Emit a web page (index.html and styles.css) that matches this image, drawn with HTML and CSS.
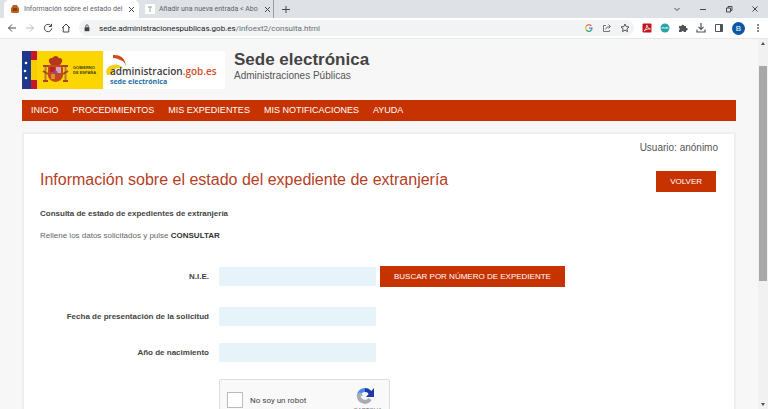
FILE: index.html
```html
<!DOCTYPE html>
<html lang="es">
<head>
    <meta charset="UTF-8">
    <meta name="viewport" content="width=device-width, initial-scale=1.0">
    <title>Información sobre el estado del expediente de extranjería</title>
    <link rel="stylesheet" href="styles.css">
</head>
<body>

    <div class="tabs">
        <div class="tab active">
            <svg class="favicon" viewBox="0 0 10 10"><path d="M3 1h4l1 2 1 1v4L8 9H2L1 8V4l1-1z" fill="#b8621b"/><path d="M3 4h4v3H3z" fill="#8d3c12"/></svg>
            <span class="tab-title">Información sobre el estado del</span>
            <button class="icon-btn" aria-label="Cerrar"><svg viewBox="0 0 10 10"><path d="M3 3l5 5M8 3l-5 5"/></svg></button>
        </div>
        <div class="tab">
            <svg class="favicon" viewBox="0 0 10 10"><rect width="10" height="10" fill="#fff"/><path d="M3 3h4M5 3v5" stroke="#8aa" fill="none"/></svg>
            <span class="tab-title">Añadir una nueva entrada &lt; Abo</span>
            <button class="icon-btn" aria-label="Cerrar"><svg viewBox="0 0 10 10"><path d="M3 3l5 5M8 3l-5 5"/></svg></button>
        </div>
        <button class="icon-btn new-tab" aria-label="Nueva pestaña"><svg viewBox="0 0 10 10"><path d="M5 2v7M1 5.500h8"/></svg></button>
        <div class="window-controls">
            <button class="icon-btn" aria-label="Buscar pestañas"><svg viewBox="0 0 10 10"><path d="M2.500 4L5 6.500 7.500 4"/></svg></button>
            <button class="icon-btn" aria-label="Minimizar"><svg viewBox="0 0 10 10"><path d="M2 5.500h6"/></svg></button>
            <button class="icon-btn" aria-label="Restaurar"><svg viewBox="0 0 10 10"><path d="M2.500 4h4v4h-4zM4 4V2.500h4v4H6.500"/></svg></button>
            <button class="icon-btn" aria-label="Cerrar ventana"><svg viewBox="0 0 10 10"><path d="M2.500 2.500l5 5M7.500 2.500l-5 5"/></svg></button>
        </div>
    </div>

    <div class="toolbar">
        <div class="history">
            <button class="icon-btn" aria-label="Atrás"><svg viewBox="0 0 10 10"><path d="M9 5H1.500M5 1.500L1.500 5 5 8.500"/></svg></button>
            <button class="icon-btn faded" aria-label="Adelante"><svg viewBox="0 0 10 10"><path d="M1 5h7.500M5 1.500L8.500 5 5 8.500"/></svg></button>
            <button class="icon-btn" aria-label="Recargar"><svg viewBox="0 0 10 10"><path d="M8 2.800A3.700 3.700 0 1 0 8.700 5.500M8.500 .8v2.700H5.800"/></svg></button>
            <button class="icon-btn" aria-label="Inicio"><svg viewBox="0 0 10 10"><path d="M1 5l4-4 4 4M2.200 4v5h5.600V4"/></svg></button>
        </div>
        <div class="address">
            <svg class="lock" viewBox="0 0 10 10"><path d="M2 4h6v5H2z" fill="#444"/><path d="M3.500 4V2.500a1.500 1.500 0 0 1 3 0V4" fill="none" stroke="#444"/></svg>
            <span class="url"><b>sede.administracionespublicas.gob.es</b>/infoext2/consulta.html</span>
            <svg viewBox="0 0 10 10" fill="none" stroke-width="1.200"><path d="M2.300 3.200A3 3 0 0 1 7.300 3" stroke="#ea4335"/><path d="M2.300 3.200a3.200 3.200 0 0 0 0 3.600" stroke="#fbbc05"/><path d="M2.300 6.800A3 3 0 0 0 7 7.500" stroke="#34a853"/><path d="M5 5.200h3A3 3 0 0 1 7 7.500" stroke="#4285f4"/></svg>
            <svg viewBox="0 0 10 10" fill="none" stroke="#777"><path d="M4 2.500H1.500v6h6V7M3.500 6.500Q4 3.500 8 3.500M6.500 1.500l2 2-2 2"/></svg>
            <svg viewBox="0 0 10 10" fill="none" stroke="#555"><path d="M5 1l1.200 2.600 2.800.3-2.100 1.900.6 2.800L5 7.200 2.500 8.600l.6-2.800L1 3.900l2.800-.3z"/></svg>
        </div>
        <div class="extensions">
            <svg viewBox="0 0 10 10"><rect x=".5" y=".5" width="9" height="9" rx="1" fill="#c4161c"/><path d="M2 8C4 6 5 4 4.800 2 5.500 5 7 6 8.500 6 6 5.500 4 6.500 2 8z" fill="none" stroke="#fff" stroke-width=".8"/></svg>
            <svg viewBox="0 0 10 10"><circle cx="5" cy="5" r="4.500" fill="#28a5a5"/><path d="M2 6V4.500h2V6M5 6V4.500h3V6M6.500 4.500V6" fill="none" stroke="#d8f2f0" stroke-width=".7"/></svg>
            <svg viewBox="0 0 10 10"><path d="M1 3h2.500a1.300 1.300 0 1 1 2.600 0H8v2a1.300 1.300 0 1 1 0 2.500V9H5.800a1.100 1.100 0 0 0-2.200 0H1V7a1.200 1.200 0 0 0 0-2.200z" fill="#505357"/></svg>
            <svg viewBox="0 0 10 10" fill="none" stroke="#505357" stroke-width="1.200"><path d="M5 0v6M2.500 3.800L5 6.300l2.500-2.500M1 6.500V9h8V6.500"/></svg>
            <svg viewBox="0 0 10 10"><path d="M1.500 1.500h7v7h-7z" fill="none" stroke="#505357"/><path d="M6 1.500h2.500v7H6z" fill="#505357"/></svg>
            <span class="avatar">B</span>
            <svg viewBox="0 0 10 10" fill="#505357"><circle cx="5" cy="2" r=".9"/><circle cx="5" cy="5" r=".9"/><circle cx="5" cy="8" r=".9"/></svg>
        </div>
    </div>

    <div class="viewport">
        <div class="page">
            <header>
                <svg class="gob-logo" viewBox="0 0 81 38" role="img" aria-label="Gobierno de España">
                    <rect width="81" height="38" fill="#fdd500"/>
                    <path d="M0 0h9v38H0z" fill="#173a8c"/>
                    <path d="M9 0h6v9H9zM9 29h6v9H9z" fill="#c8152d"/>
                    <path d="M9 9h6v20H9z" fill="#f9cd06"/>
                    <path d="M0 0h9v8H0zM0 30h9v8H0z" fill="#22358b"/>
                    <circle cx="4" cy="12" r="1.300" fill="#fff"/><circle cx="3" cy="20" r="1.300" fill="#fff"/><circle cx="4" cy="27" r="1.300" fill="#fff"/>
                    <path d="M27 11q-1-4 3-4 4-4 7 0 4 0 3 4l-2 3h-9z" fill="#b5381c"/>
                    <path d="M26 14h15v11q-1 5-7.500 6-6.500-1-7.500-6z" fill="#c4481f"/>
                    <path d="M34 16h5v6h-5z" fill="#d7a3bc"/><path d="M28 16h5v5h-5z" fill="#b92420"/><path d="M29 23h4v5h-4z" fill="#e3921f"/>
                    <circle cx="33.500" cy="21.500" r="2" fill="#8a4a98"/>
                    <path d="M23.500 15v14M43.500 15v14" stroke="#b87b35" stroke-width="2"/>
                    <path d="M21 15h5M41 15h5M21 30h5M41 30h5M21 20l5 3M41 23l5-3" stroke="#a84522" stroke-width="2"/>
                    <text x="51" y="18">GOBIERNO</text>
                    <text x="51" y="23">DE ESPAÑA</text>
                </svg>
                <div class="admin-logo">
                    <svg viewBox="0 0 30 24"><path d="M7 4q12-1 13 12-1-6-6-7-3-2-7-2z" fill="#d14a1d"/><path d="M1 24q-3-7 5-10 7-2 11 3-8-1-9 3-1 4-7 4z" fill="#f8cf18"/></svg>
                    <p class="admin-name">administracion<span>.gob.es</span></p>
                    <p class="admin-sub">sede electrónica</p>
                </div>
                <div class="site-title">
                    <h1>Sede electrónica</h1>
                    <p>Administraciones Públicas</p>
                </div>
            </header>

            <nav>
                <a href="#">INICIO</a>
                <a href="#">PROCEDIMIENTOS</a>
                <a href="#">MIS EXPEDIENTES</a>
                <a href="#">MIS NOTIFICACIONES</a>
                <a href="#">AYUDA</a>
            </nav>

            <main>
                <p class="user">Usuario: anónimo</p>
                <div class="heading">
                    <h2>Información sobre el estado del expediente de extranjería</h2>
                    <button class="btn">VOLVER</button>
                </div>
                <h3>Consulta de estado de expedientes de extranjería</h3>
                <p class="help">Rellene los datos solicitados y pulse <b>CONSULTAR</b></p>

                <form>
                    <div class="row first">
                        <label for="nie">N.I.E.</label>
                        <input type="text" id="nie">
                        <button type="button" class="btn">BUSCAR POR NÚMERO DE EXPEDIENTE</button>
                    </div>
                    <div class="row">
                        <label for="fecha">Fecha de presentación de la solicitud</label>
                        <input type="text" id="fecha">
                    </div>
                    <div class="row">
                        <label for="nacimiento">Año de nacimiento</label>
                        <input type="text" id="nacimiento">
                    </div>
                    <div class="captcha">
                        <input type="checkbox" id="robot">
                        <label for="robot">No soy un robot</label>
                        <div class="captcha-logo">
                            <svg viewBox="0 0 20 20" fill="none" stroke-width="4"><path d="M4 9a6 6 0 0 1 6-5" stroke="#4a8bf0"/><path d="M10 4a6 6 0 0 1 6 6" stroke="#1c3aa9"/><path d="M19 2v9h-8z" fill="#1c3aa9"/><path d="M4 9a6 6 0 0 0 11 4" stroke="#ababb5"/><path d="M1 10h7l-3-4z" fill="#ababb5"/></svg>
                            <span>reCAPTCHA</span>
                        </div>
                    </div>
                </form>
            </main>
        </div>
        <div class="scrollbar">
            <svg viewBox="0 0 10 10"><path d="M3 6l2-3 2 3z" fill="#505050"/></svg>
            <div class="thumb"></div>
            <svg viewBox="0 0 10 10"><path d="M3 4l2 3 2-3z" fill="#505050"/></svg>
        </div>
    </div>

</body>
</html>
```
FILE: styles.css
```css
* {
    box-sizing: border-box;
}

body {
    margin: 0;
    height: 100vh;
    display: flex;
    flex-direction: column;
    overflow: hidden;
    font-family: "Liberation Sans", Arial, sans-serif;
    color: #444;
    background: #f7f7f7;
}

h1, h2, h3, p {
    margin: 0;
}

svg {
    display: block;
    flex: none;
}

/* browser */
.tabs {
    display: flex;
    align-items: center;
    height: 18px;
    padding-left: 4px;
    background: #dee1e6;
    font-family: Roboto, sans-serif;
    font-size: 7px;
}

.tab {
    display: flex;
    align-items: center;
    gap: 4px;
    width: 135px;
    height: 18px;
    padding: 0 3px 0 6px;
    color: #5f6368;
}

.tab.active {
    background: #fff;
    border-radius: 5px 5px 0 0;
}

.tab + .tab {
    border-right: 1px solid #999da3;
}

.favicon {
    width: 10px;
    height: 10px;
}

.tab-title {
    flex: 1;
    white-space: nowrap;
}

.icon-btn {
    flex: none;
    width: 10px;
    height: 10px;
    padding: 0;
    border: none;
    background: none;
}

.icon-btn svg {
    width: 10px;
    height: 10px;
    fill: none;
    stroke: #45494d;
}

.icon-btn.faded svg {
    stroke: #b9bcc0;
}

.new-tab {
    margin-left: 7px;
}

.window-controls {
    display: flex;
    gap: 16px;
    margin-left: auto;
    padding-right: 8px;
}

.toolbar {
    display: flex;
    align-items: center;
    height: 21px;
    padding: 0 5px 0 7px;
    background: #fff;
    border-bottom: 1px solid #e4e6e8;
}

.history {
    display: flex;
    gap: 8px;
    padding-right: 8px;
}

.address {
    flex: 1;
    display: flex;
    align-items: center;
    gap: 8px;
    height: 16px;
    padding: 0 4px;
    border-radius: 8px;
    background: #f1f3f4;
    font-family: Roboto, sans-serif;
    font-size: 8px;
    color: #6b6f74;
}

.address svg, .extensions svg {
    width: 10px;
    height: 10px;
}

.address .lock {
    width: 8px;
}

.url {
    flex: 1;
}

.url b {
    font-weight: normal;
    color: #202124;
}

.extensions {
    display: flex;
    align-items: center;
    gap: 8px;
    padding-left: 8px;
}

.avatar {
    width: 13px;
    height: 13px;
    border-radius: 50%;
    background: #0b57a4;
    color: #fff;
    font-size: 8px;
    line-height: 13px;
    text-align: center;
}

.viewport {
    flex: 1;
    display: flex;
    min-height: 0;
}

.page {
    flex: 1;
    padding: 12px 22px 0;
    overflow: hidden;
}

.scrollbar {
    display: flex;
    flex-direction: column;
    width: 10px;
    background: #f1f1f1;
}

.thumb {
    height: 58%;
    margin: 17px 1px auto;
    background: #a8a8a8;
}

/* header */
header {
    display: flex;
    height: 38px;
    margin-bottom: 11px;
}

.gob-logo {
    width: 81px;
    height: 38px;
}

.gob-logo text {
    font-size: 4px;
    font-weight: bold;
    fill: #4a4210;
}

.admin-logo {
    position: relative;
    width: 121px;
    margin-left: 1px;
    padding: 14px 0 0 6px;
    background: #fff;
    font-family: "Open Sans", sans-serif;
    white-space: nowrap;
}

.admin-logo svg {
    position: absolute;
    top: 0;
    left: 2px;
    width: 30px;
    height: 24px;
}

.admin-logo p {
    position: relative;
}

.admin-name {
    font-size: 10px;
    font-weight: 600;
    line-height: 13px;
    color: #3c3c3c;
}

.admin-name span {
    color: #d5502a;
}

.admin-sub {
    font-size: 7px;
    font-weight: bold;
    line-height: 8px;
    color: #2470a8;
}

.site-title {
    padding-left: 9px;
}

h1 {
    font-size: 17px;
    line-height: 18px;
}

.site-title p {
    font-size: 10px;
    line-height: 14px;
    color: #555;
}

nav {
    display: flex;
    gap: 14px;
    padding: 0 9px;
    background: #c63300;
    font-size: 9px;
    line-height: 21px;
}

nav a {
    color: #fff;
    text-decoration: none;
}

/* content */
main {
    margin-top: 11px;
    padding: 7px 16px;
    background: #fff;
    border: 2px solid #eee;
}

.user {
    font-size: 10px;
    line-height: 14px;
    text-align: right;
    color: #555;
}

.heading {
    display: flex;
    justify-content: space-between;
    align-items: flex-start;
    margin: 16px 2px 17px 0;
}

h2 {
    font-size: 16px;
    font-weight: normal;
    line-height: 18px;
    color: #b5401f;
}

.btn {
    height: 21px;
    padding: 0 14px;
    border: none;
    background: #c63300;
    color: #fff;
    font-family: inherit;
    font-size: 8px;
}

h3, .help {
    font-size: 8px;
    line-height: 10px;
}

.help {
    margin-top: 12px;
    color: #666;
}

.help b {
    color: #333;
}

.row {
    display: flex;
    align-items: center;
    gap: 4px;
    margin-top: 17px;
}

.row.first {
    margin: 25px 0 20px;
}

.row label {
    width: 169px;
    margin-right: 6px;
    font-size: 8px;
    font-weight: bold;
    text-align: right;
}

.row input {
    width: 157px;
    height: 19px;
    padding: 0 4px;
    border: none;
    background: #e6f3f8;
}

.captcha {
    display: flex;
    align-items: center;
    gap: 7px;
    width: 171px;
    height: 42px;
    margin: 17px 0 0 179px;
    padding: 0 7px;
    border: 1px solid #ddd;
    border-radius: 2px;
    background: #f9f9f9;
    font-size: 8px;
}

.captcha input {
    appearance: none;
    width: 16px;
    height: 16px;
    margin: 0;
    border: 1px solid #bbb;
    background: #fff;
}

.captcha label {
    flex: 1;
    font-family: Roboto, sans-serif;
}

.captcha-logo {
    display: flex;
    flex-direction: column;
    align-items: center;
    font-size: 6px;
    line-height: 8px;
    color: #777;
}

.captcha-logo svg {
    width: 20px;
    height: 20px;
}
```
